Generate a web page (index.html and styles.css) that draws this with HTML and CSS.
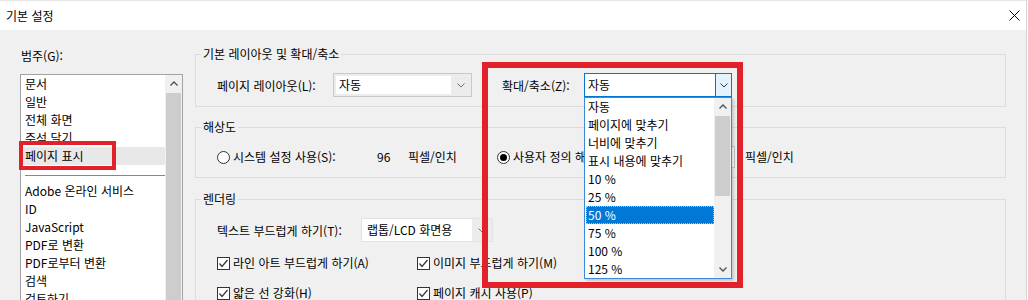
FILE: index.html
```html
<!DOCTYPE html>
<html lang="ko">
<head>
<meta charset="utf-8">
<title>기본 설정</title>
<link rel="stylesheet" href="styles.css">
</head>
<body>
<div class="window">
  <header class="titlebar">
    <span class="title">기본 설정</span>
    <svg class="close" width="11" height="11" viewBox="0 0 11 11"><path d="M0.5 0.5L10.5 10.5M10.5 0.5L0.5 10.5" stroke="#000" stroke-width="1" fill="none"/></svg>
  </header>
  <main class="content">
    <aside class="left">
      <div class="cat-label">범주(G):</div>
      <div class="listbox">
        <ul class="items">
          <li>문서</li>
          <li>일반</li>
          <li>전체 화면</li>
          <li>주석 달기</li>
          <li class="sel">페이지 표시</li>
          <li class="sep"></li>
          <li>Adobe 온라인 서비스</li>
          <li>ID</li>
          <li>JavaScript</li>
          <li>PDF로 변환</li>
          <li>PDF로부터 변환</li>
          <li>검색</li>
          <li>검토하기</li>
        </ul>
        <div class="vscroll">
          <div class="sbtn"><svg width="8" height="5" viewBox="0 0 8 5"><polyline points="0.5,4.5 4,1 7.5,4.5" fill="none" stroke="#505050" stroke-width="1.3"/></svg></div>
          <div class="thumb"></div>
        </div>
      </div>
    </aside>
    <section class="right">
      <fieldset class="group g1">
        <legend>기본 레이아웃 및 확대/축소</legend>
        <div class="row">
          <span class="lbl w116">페이지 레이아웃(L):</span>
          <div class="combo w139"><span class="field">자동</span><span class="arrow"><svg width="8" height="5" viewBox="0 0 8 5"><polyline points="0.5,0.5 4,4 7.5,0.5" fill="none" stroke="#707070" stroke-width="1"/></svg></span></div>
          <span class="lbl w82 ml30">확대/축소(Z):</span>
          <div class="combo focus w148"><span class="field">자동</span><span class="arrow"><svg width="8" height="5" viewBox="0 0 8 5"><polyline points="0.5,0.5 4,4 7.5,0.5" fill="none" stroke="#333" stroke-width="1"/></svg></span></div>
        </div>
      </fieldset>
      <fieldset class="group g2">
        <legend>해상도</legend>
        <div class="row r18">
          <span class="opt w160"><span class="radio"></span><span>시스템 설정 사용(S):</span></span>
          <span class="w31">96</span>
          <span class="w89">픽셀/인치</span>
          <span class="opt w170"><span class="radio on"></span><span>사용자 정의 해상도(U):</span></span>
          <span class="numbox"></span>
          <span>픽셀/인치</span>
        </div>
      </fieldset>
      <fieldset class="group g3">
        <legend>렌더링</legend>
        <div class="row">
          <span class="lbl w144">텍스트 부드럽게 하기(T):</span>
          <div class="combo flat w132"><span class="field">랩톱/LCD 화면용</span><span class="arrow"><svg width="8" height="5" viewBox="0 0 8 5"><polyline points="0.5,0.5 4,4 7.5,0.5" fill="none" stroke="#707070" stroke-width="1"/></svg></span></div>
        </div>
        <div class="row r18 mt12">
          <span class="opt w200"><span class="check"><svg width="11" height="11" viewBox="0 0 11 11"><polyline points="1.5,5.5 4,8.5 9.5,2" fill="none" stroke="#333" stroke-width="1.2"/></svg></span><span>라인 아트 부드럽게 하기(A)</span></span>
          <span class="opt"><span class="check"><svg width="11" height="11" viewBox="0 0 11 11"><polyline points="1.5,5.5 4,8.5 9.5,2" fill="none" stroke="#333" stroke-width="1.2"/></svg></span><span>이미지 부드럽게 하기(M)</span></span>
        </div>
        <div class="row r18 mt12">
          <span class="opt w200"><span class="check"><svg width="11" height="11" viewBox="0 0 11 11"><polyline points="1.5,5.5 4,8.5 9.5,2" fill="none" stroke="#333" stroke-width="1.2"/></svg></span><span>얇은 선 강화(H)</span></span>
          <span class="opt"><span class="check"><svg width="11" height="11" viewBox="0 0 11 11"><polyline points="1.5,5.5 4,8.5 9.5,2" fill="none" stroke="#333" stroke-width="1.2"/></svg></span><span>페이지 캐시 사용(P)</span></span>
        </div>
      </fieldset>
    </section>
  </main>

  <div class="droplist">
    <ul class="ditems">
      <li>자동</li>
      <li>페이지에 맞추기</li>
      <li>너비에 맞추기</li>
      <li>표시 내용에 맞추기</li>
      <li>10 %</li>
      <li>25 %</li>
      <li class="hl">50 %</li>
      <li>75 %</li>
      <li>100 %</li>
      <li>125 %</li>
    </ul>
    <div class="dscroll">
      <div class="sbtn"><svg width="8" height="5" viewBox="0 0 8 5"><polyline points="0.5,4.5 4,1 7.5,4.5" fill="none" stroke="#505050" stroke-width="1.3"/></svg></div>
      <div class="dthumb"></div>
      <div class="dtrack"></div>
      <div class="sbtn"><svg width="8" height="5" viewBox="0 0 8 5"><polyline points="0.5,0.5 4,4 7.5,0.5" fill="none" stroke="#505050" stroke-width="1.3"/></svg></div>
    </div>
  </div>

  <div class="annot a1"></div>
  <div class="annot a2"></div>
</div>
</body>
</html>
```

FILE: styles.css
```css
* { box-sizing: border-box; }
html, body { margin: 0; padding: 0; }
body {
  width: 1028px;
  height: 300px;
  overflow: hidden;
  background: #fff;
  font-family: "Noto Sans CJK KR", "Noto Sans", sans-serif;
  font-size: 12px;
  color: #000;
}
.window {
  position: relative;
  width: 1027px;
  height: 300px;
  border-right: 1px solid #d6d6d6;
  background: #f0f0f0;
  overflow: hidden;
}
.titlebar {
  height: 30px;
  background: #fff;
  border-top: 1px solid #e6e6e6;
  display: flex;
  align-items: center;
  justify-content: space-between;
  padding: 0 6px 0 6px;
}
.title { line-height: 16px; }
.close { display: block; }

.content { display: flex; padding-top: 16px; }

/* left category list */
.left { width: 163px; margin-left: 20px; padding-top: 2px; flex: none; }
.cat-label { line-height: 16px; padding-left: 1px; }
.listbox {
  margin-top: 10px;
  height: 240px;
  border: 1px solid #a3a3a3;
  background: #fff;
  display: flex;
}
.items { list-style: none; margin: 0; padding: 0; flex: 1; min-width: 0; }
.items li { height: 18px; line-height: 18px; padding-left: 4px; white-space: nowrap; }
.items li.sel { background: #e8e8e8; }
.items li.sep { height: 17px; padding: 10px 0 0 4px; }
.items li.sep::before { content: ""; display: block; height: 1px; background: #4799d3; }
.vscroll { width: 17px; flex: none; background: #f0f0f0; display: flex; flex-direction: column; }
.sbtn { height: 17px; flex: none; display: flex; align-items: center; justify-content: center; }
.sbtn svg { display: block; }
.thumb { flex: 1; background: #cdcdcd; margin: 1px 1px 0 1px; }

/* right groups */
.right { width: 811px; margin-left: 12px; flex: none; }
.group {
  margin: 0;
  min-width: 0;
  border: 1px solid #dcdcdc;
  padding: 11px 20px 9px 21px;
}
.group legend { padding: 0 2px; margin-left: -16px; line-height: 16px; }
.g2 { margin-top: 12px; padding-top: 13px; padding-bottom: 11px; }
.g3 { margin-top: 13px; padding-top: 11px; padding-bottom: 20px; }

.row { display: flex; align-items: center; height: 24px; white-space: nowrap; }
.row.r18 { height: 18px; line-height: 18px; }
.mt12 { margin-top: 12px; }
.lbl { flex: none; }
.w82 { width: 82px; flex: none; }
.w116 { width: 116px; flex: none; }
.w144 { width: 144px; flex: none; }
.w31 { width: 31px; flex: none; }
.w89 { width: 89px; flex: none; }
.w160 { width: 160px; flex: none; }
.w170 { width: 170px; flex: none; }
.w200 { width: 200px; flex: none; }
.ml30 { margin-left: 30px; }

.combo {
  height: 24px;
  border: 1px solid #c9c9c9;
  background: #ececec;
  display: flex;
  flex: none;
}
.combo.w139 { width: 139px; }
.combo.w148 { width: 148px; }
.combo.w132 { width: 132px; }
.combo .field {
  flex: 1;
  min-width: 0;
  background: #fff;
  margin: 2px 0 2px 2px;
  padding-left: 3px;
  line-height: 18px;
}
.combo .arrow { width: 20px; flex: none; display: flex; align-items: center; justify-content: center; }
.combo .arrow svg { display: block; }
.combo.flat { border-color: #e3e3e3; }
.combo.flat .field { margin: 0; padding-left: 5px; line-height: 22px; }
.combo.focus { border-color: #0078d7; background: #fff; }
.combo.focus .field { margin: 0; padding-left: 3px; line-height: 22px; }
.combo.focus .arrow { width: 16px; background: #e5f1fb; border-left: 1px solid #0078d7; }

.opt { display: flex; align-items: center; gap: 3px; flex: none; }
.radio {
  width: 13px; height: 13px; flex: none;
  border: 1px solid #333; border-radius: 50%; background: #fff;
  display: flex; align-items: center; justify-content: center;
}
.radio.on::after { content: ""; width: 7px; height: 7px; border-radius: 50%; background: #000; }
.check {
  width: 13px; height: 13px; flex: none;
  border: 1px solid #333; background: #fff;
  display: flex; align-items: center; justify-content: center;
}
.check svg { display: block; }
.numbox {
  width: 68px; height: 22px; margin-right: 10px; flex: none;
  border: 1px solid #c9c9c9; background: #fff;
}

/* open zoom dropdown */
.droplist {
  position: absolute;
  left: 584px;
  top: 97px;
  width: 148px;
  height: 182px;
  border: 1px solid #3b8ad6;
  background: #fff;
  display: flex;
  box-shadow: 2px 2px 3px rgba(0, 0, 0, 0.18);
}
.ditems { list-style: none; margin: 0; padding: 0; flex: 1; min-width: 0; }
.ditems li { height: 18px; line-height: 18px; padding-left: 3px; white-space: nowrap; }
.ditems li.hl {
  background: #0078d7;
  color: #fff;
  margin-left: 1px;
  padding-left: 2px;
  outline: 1px dotted #9cc8ee;
  outline-offset: -1px;
}
.dscroll { width: 17px; flex: none; background: #f0f0f0; display: flex; flex-direction: column; }
.dthumb { height: 80px; flex: none; background: #cdcdcd; margin: 1px 1px 0 1px; }
.dtrack { flex: 1; }

/* red annotation boxes */
.annot { position: absolute; border: 4px solid #e3212b; pointer-events: none; }
.a1 { left: 19px; top: 141px; width: 97px; height: 29px; }
.a2 { left: 482px; top: 62px; width: 261px; height: 226px; border-width: 6px; }
```
